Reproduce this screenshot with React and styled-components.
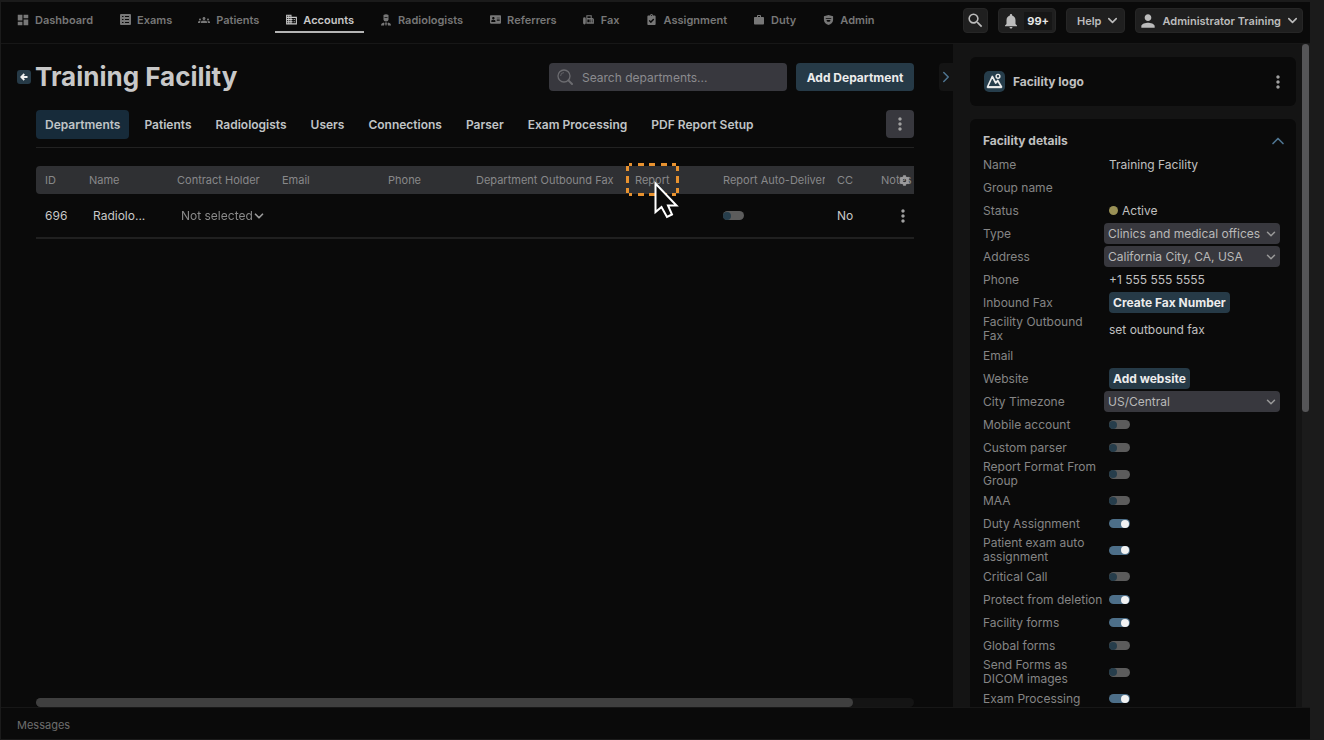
import React, { useState } from "react";
import styled, { createGlobalStyle } from "styled-components";
import {
  MdBusiness,
  MdDashboard,
  MdFax,
  MdGroups,
  MdMoreVert,
  MdNotifications,
  MdPerson,
  MdSearch,
  MdWork,
} from "react-icons/md";
import { FaClipboardCheck, FaAddressCard, FaCog } from "react-icons/fa";
import { ChevronDown, ChevronRight, ChevronUp } from "lucide-react";

const GlobalStyle = createGlobalStyle`
  * {
    box-sizing: border-box;
  }

  body {
    margin: 0;
    background-color: #1b1b1b;
    color: #c8c8c8;
    font-family: Inter, "Liberation Sans", sans-serif;
    font-size: 12px;
  }

  button, input, select {
    font-family: inherit;
    margin: 0;
  }
`;

const Page = styled.div`
  height: 100vh;
  padding: 2px 14px 1px 1px;
  display: flex;
  flex-direction: column;
`;

const TopBar = styled.header`
  flex: none;
  height: 42px;
  padding: 0 7px 4px 6px;
  display: flex;
  align-items: center;
  justify-content: space-between;
  background-color: #0a0a0a;
  border-bottom: 1px solid #171717;
`;

const Nav = styled.nav`
  display: flex;
  gap: 6px;
`;

const NavLink = styled.a`
  height: 24px;
  padding: 0 10px;
  display: flex;
  align-items: center;
  gap: 6px;
  border-bottom: 2px solid ${props => (props.$active ? "#b4b4b4" : "transparent")};
  color: ${props => (props.$active ? "#c8c8c8" : "#777777")};
  font-size: 11px;
  font-weight: 600;
  text-decoration: none;
  white-space: nowrap;
`;

const NavIcon = styled.span`
  width: 12px;
  display: flex;
  justify-content: center;

  svg {
    flex: none;
  }
`;

const TopActions = styled.div`
  display: flex;
  gap: 10px;
`;

const TopBtn = styled.button`
  height: 25px;
  padding: 0 ${props => props.$pad};
  display: flex;
  align-items: center;
  justify-content: center;
  gap: 4px;
  background-color: #1f1f1f;
  border: 1px solid #262626;
  border-radius: 4px;
  color: #bcbcbc;
  font-size: 11px;
  font-weight: 600;
  white-space: nowrap;
  cursor: pointer;
`;

const Count = styled.span`
  padding: 2px 3px;
  background-color: #161616;
  color: #e6e6e6;
  font-weight: 700;
`;

const Body = styled.div`
  flex: 1;
  min-height: 0;
  display: flex;
`;

const Main = styled.main`
  flex: 1;
  min-width: 0;
  padding: 19px 0 0 16px;
  display: flex;
  flex-direction: column;
  background-color: #0a0a0a;
`;

const TitleRow = styled.div`
  flex: none;
  display: flex;
  align-items: center;
`;

const BackBtn = styled.button`
  width: 14px;
  height: 14px;
  margin-right: 4px;
  padding: 0;
  display: flex;
  align-items: center;
  justify-content: center;
  background-color: #263a47;
  border: none;
  border-radius: 3px;
  cursor: pointer;
`;

const Title = styled.h1`
  flex: 1;
  margin: 0;
  color: #c8c8c8;
  font-size: 26px;
  font-weight: 700;
  line-height: 28px;
  white-space: nowrap;
`;

const SearchBox = styled.label`
  width: 238px;
  height: 28px;
  margin-right: 9px;
  padding: 0 8px;
  display: flex;
  align-items: center;
  gap: 9px;
  background-color: #38383e;
  border-radius: 4px;
  color: #6c6c70;
`;

const SearchInput = styled.input`
  flex: 1;
  min-width: 0;
  padding: 0;
  background: none;
  border: none;
  outline: none;
  color: #c4c4c4;
  font-size: 12px;

  &::placeholder {
    color: #8b8b8f;
    opacity: 1;
  }
`;

const AddBtn = styled.button`
  width: 118px;
  height: 28px;
  padding: 0;
  background-color: #263a47;
  border: none;
  border-radius: 4px;
  color: #ececec;
  font-size: 12px;
  font-weight: 700;
  cursor: pointer;
`;

const CollapseBtn = styled.button`
  width: 14px;
  height: 28px;
  margin-left: 25px;
  padding: 0;
  display: flex;
  align-items: center;
  justify-content: center;
  background-color: #141414;
  border: none;
  border-radius: 4px 0 0 4px;
  color: #4f7591;
  cursor: pointer;

  svg {
    flex: none;
  }
`;

const Content = styled.div`
  flex: 1;
  min-height: 0;
  margin: 19px 39px 0 19px;
  display: flex;
  flex-direction: column;
`;

const TabBar = styled.div`
  flex: none;
  height: 38px;
  display: flex;
  align-items: flex-start;
  justify-content: space-between;
  border-bottom: 1px solid #222222;
`;

const Tabs = styled.div`
  display: flex;
  gap: 6px;
`;

const Tab = styled.button`
  height: 29px;
  padding: 0 9px;
  background-color: ${props => (props.$active ? "#172b3a" : "transparent")};
  border: none;
  border-radius: 4px;
  color: #c0c4c6;
  font-size: 12px;
  font-weight: 600;
  white-space: nowrap;
  cursor: pointer;
`;

const TabMenuBtn = styled.button`
  width: 28px;
  height: 28px;
  padding: 0;
  display: flex;
  align-items: center;
  justify-content: center;
  background-color: #38383e;
  border: none;
  border-radius: 4px;
  color: #a0a0a0;
  cursor: pointer;
`;

const TableScroll = styled.div`
  flex: 1;
  min-height: 0;
  padding-top: 18px;
  overflow: hidden;
`;

const Table = styled.table`
  width: 945px;
  table-layout: fixed;
  border-collapse: separate;
  border-spacing: 0;
`;

const Th = styled.th`
  position: relative;
  width: ${props => props.$width}px;
  height: 28px;
  padding: 0 3px 0 9px;
  background-color: #2f3033;
  color: #88888a;
  font-size: 11px;
  font-weight: 400;
  text-align: left;
  white-space: nowrap;

  &:first-child {
    border-radius: 4px 0 0 4px;
  }
`;

const ThText = styled.span`
  display: block;
  overflow: hidden;
`;

const Td = styled.td`
  height: 45px;
  padding: 0 0 0 ${props => (props.$inset ? "13px" : "9px")};
  border-bottom: 2px solid #202020;
  white-space: nowrap;
`;

const StickyTh = styled.th`
  position: sticky;
  right: 0;
  width: 22px;
  padding: 0 0 0 7px;
`;

const StickyTd = styled.td`
  position: sticky;
  right: 0;
  padding: 0 0 0 1px;
  border-bottom: 2px solid #202020;
`;

const IconBtn = styled.button`
  padding: 0;
  display: flex;
  align-items: center;
  background: none;
  border: none;
  color: ${props => props.$color || "#a0a0a0"};
  cursor: pointer;
`;

const Highlight = styled.svg`
  position: absolute;
  top: -3px;
  left: 0;
  z-index: 1;
`;

const Pointer = styled.svg`
  position: absolute;
  top: 15px;
  left: 28px;
  z-index: 2;
`;

const ScrollThumbX = styled.div`
  flex: none;
  height: 9px;
  background-color: #141414;
  border-radius: 5px;

  &::after {
    content: "";
    display: block;
    width: 93%;
    height: 100%;
    background-color: #3f3f3f;
    border-radius: 5px;
  }
`;

const Side = styled.aside`
  flex: none;
  width: 357px;
  display: flex;
  background-color: #141414;
`;

const Cards = styled.div`
  flex: 1;
  padding: 13px 6px 0 17px;
  display: flex;
  flex-direction: column;
  gap: 13px;
  overflow: hidden;
`;

const ScrollTrackY = styled.div`
  width: 8px;
  background-color: #1b1b1b;

  &::after {
    content: "";
    display: block;
    width: 7px;
    height: 368px;
    background-color: #555557;
    border-radius: 4px;
  }
`;

const Card = styled.section`
  flex: none;
  padding: ${props => props.$pad};
  background-color: #0a0a0a;
  border-radius: 6px;
`;

const CardHead = styled.div`
  display: flex;
  align-items: center;
  justify-content: space-between;
`;

const CardTitle = styled.h2`
  margin: 0;
  display: flex;
  align-items: center;
  gap: 8px;
  color: #c0c0c0;
  font-size: 12px;
  font-weight: 700;
  line-height: 20px;
`;

const Fields = styled.div`
  padding: 3px 8px 0 0;
  display: flex;
  flex-direction: column;
  gap: 2px;
`;

const Field = styled.div`
  min-height: 21px;
  display: grid;
  grid-template-columns: 126px 1fr;
  align-items: center;
`;

const FieldLabel = styled.label`
  max-width: 122px;
  color: #858585;
  line-height: 14px;
`;

const FieldValue = styled.div`
  display: flex;
  align-items: center;
  gap: 4px;
  color: #c0c0c0;
`;

const StatusDot = styled.span`
  width: 9px;
  height: 9px;
  background-color: #9a9156;
  border-radius: 50%;
`;

const SmallBtn = styled.button`
  height: 21px;
  padding: 0 4px 1px;
  background-color: #263a47;
  border: none;
  border-radius: 4px;
  color: #ececec;
  font-size: 12px;
  font-weight: 700;
  cursor: pointer;
`;

const SelectWrap = styled.div`
  position: relative;
  flex: ${props => (props.$filled ? "1" : "none")};
  margin-left: ${props => (props.$filled ? "-5px" : "0")};
  display: inline-flex;
  align-items: center;
  color: #9a9a9a;

  svg {
    position: absolute;
    right: ${props => (props.$filled ? "2px" : "0")};
    pointer-events: none;
  }
`;

const Select = styled.select`
  width: ${props => (props.$filled ? "100%" : "auto")};
  height: 21px;
  padding: ${props => (props.$filled ? "0 18px 0 4px" : "0 13px 0 0")};
  appearance: none;
  background-color: ${props => (props.$filled ? "#38383e" : "transparent")};
  border: none;
  border-radius: 4px;
  color: ${props => (props.$filled ? "#b8b8b8" : "#8a8a8a")};
  font-size: 12px;
`;

const Toggle = styled.input`
  appearance: none;
  width: 21px;
  height: 9px;
  padding: 0 1px 0 0;
  display: flex;
  align-items: center;
  background-color: #5c5c5c;
  border-radius: 5px;
  cursor: pointer;

  &::before {
    content: "";
    width: 8px;
    height: 8px;
    background-color: #263d4b;
    border-radius: 50%;
  }

  &:checked {
    justify-content: flex-end;
    background-color: #4d6f89;
  }

  &:checked::before {
    background-color: #f2f2f2;
  }
`;

const Footer = styled.footer`
  flex: none;
  height: 32px;
  padding: 2px 16px 0;
  display: flex;
  align-items: center;
  background-color: #0a0a0a;
  border-top: 1px solid #171717;
  color: #6e6e6e;
  font-size: 11px;
`;

function ExamsIcon() {
  return (
    <svg width="11" height="11" viewBox="0 0 11 11">
      <rect width="11" height="11" rx="1" fill="currentColor" />
      <path
        d="M2 2.500h1.500M5 2.500h4M2 5.500h1.500M5 5.500h4M2 8.500h1.500M5 8.500h4"
        stroke="#0a0a0a"
        strokeWidth="1"
      />
    </svg>
  );
}

function RadiologistIcon() {
  return (
    <svg width="12" height="12" viewBox="0 0 24 24" fill="currentColor">
      <path d="M7 2q5-3 10 0v9q0 4-5 4t-5-4z" />
      <path d="M9 7h6" stroke="#0a0a0a" strokeWidth="1.5" />
      <path d="M2 23q0-5 6-6l1 2-1 4zM22 23q0-5-6-6l-1 2 1 4zM10 17h4l-1 6h-2z" />
    </svg>
  );
}

function AdminIcon() {
  return (
    <svg width="11" height="12" viewBox="0 0 24 24">
      <path d="M12 1l10 3v8c0 6-5 9-10 11C7 21 2 18 2 12V4z" fill="currentColor" />
      <path d="M6 8h12v2H6zM8 12h8v2q-4 4-8 0z" fill="#0a0a0a" />
    </svg>
  );
}

function LensIcon() {
  return (
    <svg width="16" height="16" viewBox="0 0 16 16" fill="none" stroke="currentColor">
      <circle cx="7" cy="7" r="6" strokeWidth="1.3" />
      <path d="M3.6 7A3.4 3.4 0 0 1 7 3.6" strokeWidth="0.8" />
      <path d="M11.4 11.4L15 15" strokeWidth="2" strokeLinecap="round" />
    </svg>
  );
}

function BackIcon() {
  return (
    <svg width="8" height="8" viewBox="0 0 8 8" fill="none" stroke="#f0f0f0" strokeWidth="1.8">
      <path d="M7.5 4H1.5M4.3 1L1.3 4l3 3" />
    </svg>
  );
}

function LogoIcon() {
  return (
    <svg width="21" height="21" viewBox="0 0 21 21" fill="none">
      <rect width="21" height="21" rx="5" fill="#263d4b" />
      <g stroke="#ececec" strokeWidth="1.7" strokeLinejoin="round">
        <path d="M3.5 16L8.3 5.500l3.400 6.500 2-2.500L17.500 16z" />
        <path d="M3.300 16.200h14.400" strokeWidth="2" />
        <circle cx="14" cy="5.300" r="1.900" strokeWidth="1.400" />
      </g>
    </svg>
  );
}

const navItems = [
  { label: "Dashboard", icon: <MdDashboard size={14} /> },
  { label: "Exams", icon: <ExamsIcon /> },
  { label: "Patients", icon: <MdGroups size={12} /> },
  { label: "Accounts", icon: <MdBusiness size={13} />, active: true },
  { label: "Radiologists", icon: <RadiologistIcon /> },
  { label: "Referrers", icon: <FaAddressCard size={11} /> },
  { label: "Fax", icon: <MdFax size={13} /> },
  { label: "Assignment", icon: <FaClipboardCheck size={11} /> },
  { label: "Duty", icon: <MdWork size={12} /> },
  { label: "Admin", icon: <AdminIcon /> },
];

const tabs = [
  "Departments",
  "Patients",
  "Radiologists",
  "Users",
  "Connections",
  "Parser",
  "Exam Processing",
  "PDF Report Setup",
];

const columns = [
  { label: "ID", width: 44 },
  { label: "Name", width: 88 },
  { label: "Contract Holder", width: 105 },
  { label: "Email", width: 106 },
  { label: "Phone", width: 88 },
  { label: "Department Outbound Fax", width: 159 },
  { label: "Report", width: 88, marked: true },
  { label: "Report Auto-Delivery", width: 114 },
  { label: "CC", width: 44 },
  { label: "Notes", width: 87 },
];

const fields = [
  { label: "Name", text: "Training Facility" },
  { label: "Group name" },
  { label: "Status", status: "Active" },
  { label: "Type", select: "Clinics and medical offices" },
  { label: "Address", select: "California City, CA, USA" },
  { label: "Phone", text: "+1 555 555 5555" },
  { label: "Inbound Fax", button: "Create Fax Number" },
  { label: "Facility Outbound Fax", text: "set outbound fax" },
  { label: "Email" },
  { label: "Website", button: "Add website" },
  { label: "City Timezone", select: "US/Central" },
  { label: "Mobile account", toggle: false },
  { label: "Custom parser", toggle: false },
  { label: "Report Format From Group", toggle: false },
  { label: "MAA", toggle: false },
  { label: "Duty Assignment", toggle: true },
  { label: "Patient exam auto assignment", toggle: true },
  { label: "Critical Call", toggle: false },
  { label: "Protect from deletion", toggle: true },
  { label: "Facility forms", toggle: true },
  { label: "Global forms", toggle: false },
  { label: "Send Forms as DICOM images", toggle: false },
  { label: "Exam Processing", toggle: true },
];

function FieldRow({ field }) {
  const id = field.label.toLowerCase().replace(/ /g, "-");
  const isControl = field.select || field.button || field.toggle !== undefined;

  return (
    <Field>
      <FieldLabel as={isControl ? "label" : "span"} htmlFor={isControl ? id : undefined}>
        {field.label}
      </FieldLabel>
      <FieldValue>
        {field.text}
        {field.status && (
          <>
            <StatusDot />
            {field.status}
          </>
        )}
        {field.select && (
          <SelectWrap $filled>
            <Select id={id} $filled>
              <option>{field.select}</option>
            </Select>
            <ChevronDown size={14} strokeWidth={2.5} />
          </SelectWrap>
        )}
        {field.button && <SmallBtn id={id}>{field.button}</SmallBtn>}
        {field.toggle !== undefined && (
          <Toggle id={id} type="checkbox" defaultChecked={field.toggle} />
        )}
      </FieldValue>
    </Field>
  );
}

function ReportMarker() {
  return (
    <>
      <Highlight width="53" height="33" fill="none" stroke="#e8922f" strokeWidth="3">
        <path d="M3 1.500h3m6 0h6m5 0h6m6 0h6m5 0h4" />
        <path d="M3 31.500h3m6 0h6m5 0h6m6 0h6m5 0h4" />
        <path d="M1.500 3v5m0 5v7m0 5v5M51.500 3v5m0 5v7m0 5v5" />
      </Highlight>
      <Pointer width="25" height="39" viewBox="0 0 25 39">
        <path
          d="M1.500 2.500v28.500l6-5 5.500 10 5-2.500-4-9h8.500z"
          fill="#0a0a0a"
          stroke="#ffffff"
          strokeWidth="2"
        />
      </Pointer>
    </>
  );
}

function DepartmentsTable() {
  return (
    <Table>
      <thead>
        <tr>
          {columns.map(col => (
            <Th key={col.label} $width={col.width}>
              <ThText>{col.label}</ThText>
              {col.marked && <ReportMarker />}
            </Th>
          ))}
          <StickyTh>
            <IconBtn aria-label="Table settings" $color="#9a9a9c">
              <FaCog size={11} />
            </IconBtn>
          </StickyTh>
        </tr>
      </thead>
      <tbody>
        <tr>
          <Td>696</Td>
          <Td $inset>Radiolo...</Td>
          <Td $inset>
            <SelectWrap>
              <Select aria-label="Contract holder">
                <option>Not selected</option>
              </Select>
              <ChevronDown size={14} strokeWidth={3} />
            </SelectWrap>
          </Td>
          <Td />
          <Td />
          <Td />
          <Td />
          <Td>
            <Toggle type="checkbox" aria-label="Report auto-delivery" />
          </Td>
          <Td>No</Td>
          <Td />
          <StickyTd>
            <IconBtn aria-label="Row actions">
              <MdMoreVert size={20} />
            </IconBtn>
          </StickyTd>
        </tr>
      </tbody>
    </Table>
  );
}

function App() {
  const [activeTab, setActiveTab] = useState("Departments");

  return (
    <Page>
      <GlobalStyle />
      <TopBar>
        <Nav>
          {navItems.map(item => (
            <NavLink key={item.label} href="#" $active={item.active}>
              <NavIcon>{item.icon}</NavIcon>
              {item.label}
            </NavLink>
          ))}
        </Nav>
        <TopActions>
          <TopBtn $pad="2px" aria-label="Search">
            <MdSearch size={19} />
          </TopBtn>
          <TopBtn $pad="3px">
            <MdNotifications size={18} />
            <Count>99+</Count>
          </TopBtn>
          <TopBtn $pad="4px 0 10px">
            Help
            <ChevronDown size={15} strokeWidth={2.5} />
          </TopBtn>
          <TopBtn $pad="2px">
            <MdPerson size={20} />
            Administrator Training
            <ChevronDown size={15} strokeWidth={2.5} />
          </TopBtn>
        </TopActions>
      </TopBar>

      <Body>
        <Main>
          <TitleRow>
            <BackBtn aria-label="Back">
              <BackIcon />
            </BackBtn>
            <Title>Training Facility</Title>
            <SearchBox>
              <LensIcon />
              <SearchInput placeholder="Search departments..." aria-label="Search departments" />
            </SearchBox>
            <AddBtn>Add Department</AddBtn>
            <CollapseBtn aria-label="Collapse panel">
              <ChevronRight size={18} />
            </CollapseBtn>
          </TitleRow>

          <Content>
            <TabBar>
              <Tabs>
                {tabs.map(tab => (
                  <Tab
                    key={tab}
                    $active={tab === activeTab}
                    onClick={() => setActiveTab(tab)}
                  >
                    {tab}
                  </Tab>
                ))}
              </Tabs>
              <TabMenuBtn aria-label="More">
                <MdMoreVert size={20} />
              </TabMenuBtn>
            </TabBar>
            <TableScroll>
              <DepartmentsTable />
            </TableScroll>
            <ScrollThumbX />
          </Content>
        </Main>

        <Side>
          <Cards>
            <Card $pad="14px 8px 14px 14px">
              <CardHead>
                <CardTitle>
                  <LogoIcon />
                  Facility logo
                </CardTitle>
                <IconBtn aria-label="Logo actions">
                  <MdMoreVert size={20} />
                </IconBtn>
              </CardHead>
            </Card>
            <Card $pad="12px 8px 12px 13px">
              <CardHead>
                <CardTitle>Facility details</CardTitle>
                <IconBtn aria-label="Collapse" $color="#4f7591">
                  <ChevronUp size={20} />
                </IconBtn>
              </CardHead>
              <Fields>
                {fields.map(field => (
                  <FieldRow key={field.label} field={field} />
                ))}
              </Fields>
            </Card>
          </Cards>
          <ScrollTrackY />
        </Side>
      </Body>

      <Footer>Messages</Footer>
    </Page>
  );
}

export default App;
